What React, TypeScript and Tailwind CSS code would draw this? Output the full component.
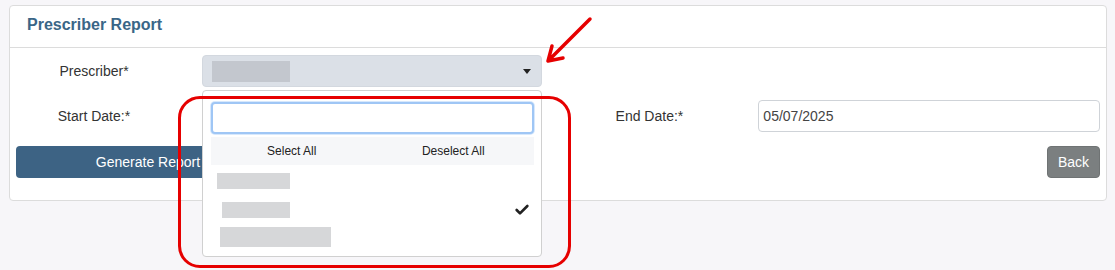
import { Check } from "lucide-react";

// Bloc gris qui masque un nom (capture floutée)
const Masked = ({ className }: { className: string }) => <div className={`bg-[#d6d7d9] ${className}`} />;

const App = () => {
  return (
    <div className="relative h-[270px] w-[1115px] overflow-hidden bg-[#f7f6f9] pt-[5px] pl-[9px] pr-[8px] font-['Liberation_Sans',Arial,sans-serif] text-[14px] text-[#333]">
      <div className="rounded-[4px] border border-[#dcdcdc] bg-white">
        <div className="flex h-[42px] items-center border-b border-[#dcdcdc] px-[17px] pb-[4px]">
          <h1 className="text-[16px] font-bold text-[#3a6687]">Prescriber Report</h1>
        </div>

        <div className="px-[6px] pt-[7px] pb-[22px]">
          {/* Prescriber */}
          <div className="flex items-center">
            <label className="w-[156px] text-center">Prescriber*</label>
            <div className="relative ml-[30px]">
              <button className="flex h-[32px] w-[340px] items-center justify-between rounded-[4px] border border-[#d3d8df] bg-[#dbe0e7] pl-[9px] pr-[10px]">
                <div className="h-[21px] w-[78px] bg-[#c3c7ce]" />
                <span className="h-0 w-0 border-x-[4px] border-t-[5px] border-x-transparent border-t-[#222]" />
              </button>

              {/* Liste déroulante ouverte */}
              <div className="absolute left-0 top-[35px] z-10 h-[167px] w-[340px] rounded-[4px] border border-[#d0d0d0] bg-white pl-[8px] pr-[7px] pt-[11px]">
                <input className="h-[32px] w-full rounded-[4px] border-2 border-[#9fc6f5] bg-white outline-none shadow-[0_0_0_1px_#d7e8fc]" />
                <div className="mt-[3px] grid h-[28px] grid-cols-2 items-center bg-[#f6f7f9] text-[12px] text-[#222]">
                  <span className="text-center">Select All</span>
                  <span className="text-center">Deselect All</span>
                </div>
                <div className="mt-[8px] flex h-[16px] items-start pl-[6px]">
                  <Masked className="h-[16px] w-[73px]" />
                </div>
                <div className="mt-[13px] flex h-[16px] items-center justify-between pl-[11px] pr-[4px]">
                  <Masked className="h-[16px] w-[68px]" />
                  <Check className="h-[16px] w-[16px] text-[#222]" strokeWidth={4} />
                </div>
                <div className="mt-[9px] pl-[9px]">
                  <Masked className="h-[20px] w-[111px]" />
                </div>
              </div>
            </div>
          </div>

          {/* Dates */}
          <div className="mt-[13px] flex items-center">
            <label className="w-[156px] text-center">Start Date:*</label>
            <input className="ml-[30px] h-[32px] w-[340px] rounded-[4px] border border-[#ccc]" />
            <label className="ml-[30px] w-[156px] text-center">End Date:*</label>
            <input
              defaultValue="05/07/2025"
              className="ml-[31px] h-[32px] w-[342px] rounded-[4px] border border-[#cfd3d8] px-[4px] text-[14px] text-[#444] outline-none"
            />
          </div>

          {/* Boutons */}
          <div className="mt-[14px] flex items-center justify-between">
            <button className="h-[32px] w-[264px] rounded-[4px] bg-[#3d6384] text-[14px] text-white">Generate Report</button>
            <button className="h-[32px] w-[53px] rounded-[4px] border border-[#6f7374] bg-[#7b7f80] text-[14px] text-white">Back</button>
          </div>
        </div>
      </div>

      {/* Annotations rouges */}
      <div className="pointer-events-none absolute left-[178px] top-[96px] z-20 h-[172px] w-[393px] rounded-[22px] border-[3px] border-[#e60000]" />
      <svg className="pointer-events-none absolute left-[540px] top-[12px] z-20" width="60" height="56" viewBox="0 0 60 56">
        <path d="M50 7 L8 49 M8 49 L12 34 M8 49 L23 46" stroke="#e60000" strokeWidth="3.5" strokeLinecap="round" strokeLinejoin="round" fill="none" />
      </svg>
    </div>
  );
};

export default App;
